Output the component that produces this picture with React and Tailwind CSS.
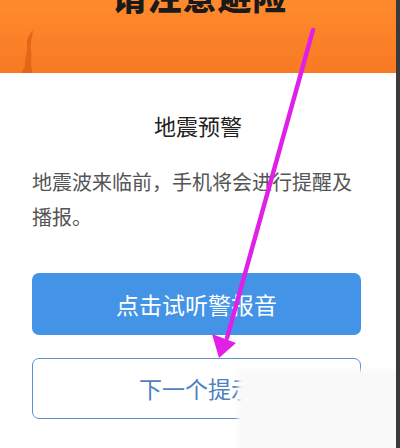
import React from 'react';

const cjk = { fontFamily: '"Noto Sans CJK SC", "Noto Sans", sans-serif' };

function Arrow() {
  return (
    <svg className="absolute left-0 top-0 pointer-events-none" width="400" height="448" viewBox="0 0 400 448">
      <line x1="313" y1="30" x2="227" y2="338" stroke="#e020e8" strokeWidth="4.5" strokeLinecap="round" />
      <polygon points="219,358 212,334 236,343" fill="#e020e8" />
    </svg>
  );
}

export default function App() {
  return (
    <div className="relative w-[400px] h-[448px] overflow-hidden bg-white" style={cjk}>
      <div className="relative h-[73px] bg-gradient-to-b from-[#ff8a2e] to-[#f87a22] overflow-hidden">
        <div className="-mt-[24px] text-center text-[34px] font-black leading-[40px] text-[#1a1a1a] tracking-[1px]">
          请注意避险
        </div>
        <svg className="absolute left-[18px] top-[28px]" width="22" height="46" viewBox="0 0 22 46">
          <path d="M15 2 C10 8 8 12 9 18 C10 24 6 30 7 38 L3 46 L15 46 C12 38 14 30 13 22 C12 14 15 8 15 2 Z" fill="#dc5f14" opacity="0.75" />
        </svg>
      </div>

      <div className="flex flex-col pl-[32px] pr-[40px]">
        <div className="mt-[38px] text-center text-[22px] leading-[28px] text-[#222] pl-[4px]">地震预警</div>
        <p className="mt-[25px] text-[20px] leading-[35px] text-[#555]">
          地震波来临前，手机将会进行提醒及播报。
        </p>
        <button className="mt-[39px] h-[62px] w-[329px] rounded-[7px] bg-[#4393e6] text-[23px] text-white">
          点击试听警报音
        </button>
        <button className="mt-[23px] h-[61px] w-[329px] rounded-[7px] border-[1.5px] border-[#5d90cf] bg-white text-[23px] text-[#4f80bf]">
          下一个提示
        </button>
      </div>

      <div className="absolute left-[238px] top-[370px] w-[170px] h-[90px] bg-[#f9f9f9] blur-[2px]" />
      <div className="absolute right-0 top-0 w-[4px] h-full bg-[#3a3a3a]" />
      <Arrow />
    </div>
  );
}
